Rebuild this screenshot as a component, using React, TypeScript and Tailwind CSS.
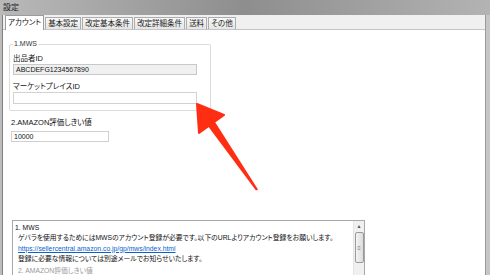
import React from 'react';

const tabs = ['アカウント', '基本設定', '改定基本条件', '改定詳細条件', '送料', 'その他'];

const font = { fontFamily: '"Liberation Sans", "Noto Sans CJK JP", sans-serif', fontFeatureSettings: '"palt"' };

export default function App() {
  return (
    <div className="relative w-[490px] h-[275px] overflow-hidden bg-white text-[#111]" style={font}>
      {/* title bar */}
      <div className="h-[15px] flex items-center pl-[3px] bg-gradient-to-r from-[#b9b9b9] via-[#8e8e8e] to-[#b3b3b3]">
        <span className="text-[8px] leading-none text-[#1b1b1b]">設定</span>
      </div>

      <div className="flex h-[260px]">
        {/* left frame */}
        <div className="w-[3px] bg-[#bdbdbd] border-r border-[#808080]" />

        <div className="flex-1 flex flex-col">
          {/* tab strip */}
          <div className="h-[22px] bg-[#f0f0f0] border-b border-[#c4c4c4] flex items-end pl-[2px]">
            {tabs.map((t, i) =>
              i === 0 ? (
                <div
                  key={t}
                  className="h-[15px] px-[2px] bg-white border border-b-0 border-[#9c9c9c] text-[7.5px] leading-[13px] -mb-px"
                >
                  {t}
                </div>
              ) : (
                <div
                  key={t}
                  className="h-[12px] px-[2px] ml-px bg-gradient-to-b from-[#f7f7f7] to-[#e6e6e6] border border-b-0 border-[#acacac] text-[7.5px] leading-[11px] text-[#222]"
                >
                  {t}
                </div>
              )
            )}
          </div>

          {/* panel */}
          <div className="flex-1 flex flex-col pl-[6px] pt-[14px]">
            <div className="relative w-[202px] h-[67px] border border-[#dcdcdc] rounded-[2px] px-[3px] pt-[9px]">
              <span className="absolute -top-[5px] left-[3px] bg-white px-px text-[7px] leading-[8px] text-[#333]">1.MWS</span>
              <div className="text-[7.5px] leading-[9px]">出品者ID</div>
              <div className="mt-[1px] w-[184px] h-[11px] bg-[#f0f0f0] border border-[#c8c8c8] pl-[2px] text-[7px] leading-[9px]">
                ABCDEFG1234567890
              </div>
              <div className="mt-[7px] text-[7.5px] leading-[9px]">マーケットプレイスID</div>
              <div className="mt-[1px] w-[184px] h-[12px] bg-white border border-[#d2d2d2]" />
            </div>

            <div className="mt-[7px] ml-[2px] text-[7.5px] leading-[9px]">2.AMAZON評価しきい値</div>
            <div className="mt-[4px] ml-[2px] w-[98px] h-[11px] border border-[#d0d0d0] pl-[2px] text-[7px] leading-[9px]">
              10000
            </div>

            {/* description box */}
            <div className="mt-[78px] ml-[3px] w-[353px] h-[70px] border border-[#a8a8a8] flex">
              <div className="flex-1 min-w-0 pl-[2px] pt-[2px] text-[6.8px] leading-[10.3px] whitespace-nowrap overflow-hidden">
                <div>1. MWS</div>
                <div className="pl-[3px]">ゲバラを使用するためにはMWSのアカウント登録が必要です。以下のURLよりアカウント登録をお願いします。</div>
                <div className="pl-[3px] text-[#0b5fd0] underline">https://sellercentral.amazon.co.jp/gp/mws/index.html</div>
                <div className="pl-[3px]">登録に必要な情報については別途メールでお知らせいたします。</div>
                <div className="pl-[3px] mt-[2px] text-[#999]">2. AMAZON評価しきい値</div>
              </div>
              <div className="w-[11px] bg-[#f0f0f0] border-l border-[#e4e4e4] flex flex-col items-center">
                <div className="h-[11px] text-[5px] leading-[11px] text-[#555]">▲</div>
                <div className="w-[9px] h-[31px] rounded-[2px] border border-[#9a9a9a] bg-gradient-to-r from-[#f4f4f4] to-[#dcdcdc] flex items-center justify-center text-[6px] leading-none text-[#777]">
                  ≡
                </div>
              </div>
            </div>
          </div>
        </div>

        {/* right frame */}
        <div className="w-[5px] bg-[#c6c6c6] border-l border-[#9a9a9a]" />
      </div>

      {/* red annotation arrow */}
      <svg className="absolute left-0 top-0 pointer-events-none" width="490" height="275">
        <polygon points="197,104 224,115 199,133" fill="#ff2d12" stroke="#ff2d12" strokeWidth="2" strokeLinejoin="round" />
        <polygon points="204.5,121.5 211.5,116.5 258,189.5 256,190.5" fill="#ff2d12" />
      </svg>
    </div>
  );
}
